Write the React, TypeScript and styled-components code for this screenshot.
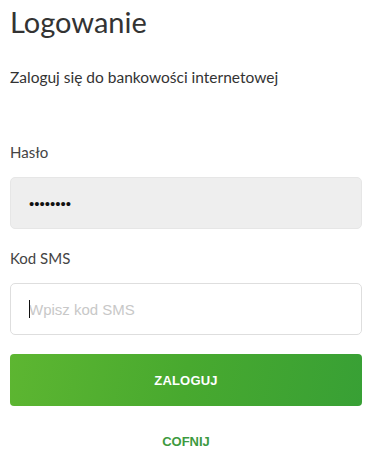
import { createGlobalStyle } from 'styled-components'
import styled from 'styled-components'

const GlobalStyle = createGlobalStyle`
  body {
    margin: 0;
    background: #fff;
    font-family: Lato, 'Open Sans', sans-serif;
    color: #333;
  }
  * {
    box-sizing: border-box;
  }
`

const Page = styled.div`
  display: flex;
  flex-direction: column;
  padding: 4px 11px 0 10px;
`

const Title = styled.h1`
  margin: 0;
  font-size: 29px;
  font-weight: 400;
  line-height: 36px;
  color: #333;
`

const Subtitle = styled.p`
  margin: 28px 0 0;
  font-size: 15.5px;
  line-height: 18px;
  color: #333;
`

const Field = styled.div<{ $first?: boolean }>`
  display: flex;
  flex-direction: column;
  margin-top: ${(p) => (p.$first ? '57px' : '20px')};
`

const Label = styled.label`
  font-size: 15px;
  line-height: 18px;
  color: #444;
  margin-bottom: 16px;
`

const InputBox = styled.div`
  position: relative;
`

const Input = styled.input<{ $filled?: boolean }>`
  display: block;
  width: 100%;
  height: 52px;
  padding: 0 18px;
  border-radius: 5px;
  border: 1px solid ${(p) => (p.$filled ? '#e6e6e6' : '#dedede')};
  background: ${(p) => (p.$filled ? '#eeeeee' : '#fff')};
  font-family: 'Liberation Sans', Arial, sans-serif;
  font-size: 15px;
  color: #111;
  outline: none;
  caret-color: #111;

  &::placeholder {
    color: #c8c8c8;
  }
`

const Caret = styled.span`
  position: absolute;
  left: 19px;
  top: 17px;
  width: 1px;
  height: 18px;
  background: #111;
  pointer-events: none;
`

const Actions = styled.div`
  display: flex;
  flex-direction: column;
  align-items: center;
  margin-top: 19px;
`

const PrimaryButton = styled.button`
  width: 100%;
  height: 52px;
  border: none;
  border-radius: 4px;
  background: linear-gradient(100deg, #5db631 0%, #48a92f 50%, #38a035 100%);
  color: #fff;
  font-family: 'Liberation Sans', Arial, sans-serif;
  font-weight: 700;
  font-size: 13px;
  letter-spacing: 0.2px;
  cursor: pointer;
`

const LinkButton = styled.button`
  margin-top: 28px;
  border: none;
  background: none;
  padding: 0;
  color: #3d9a3f;
  font-family: 'Liberation Sans', Arial, sans-serif;
  font-weight: 700;
  font-size: 13px;
  line-height: 16px;
  cursor: pointer;
`

export default function App() {
  return (
    <>
      <GlobalStyle />
      <Page>
        <Title>Logowanie</Title>
        <Subtitle>Zaloguj się do bankowości internetowej</Subtitle>

        <Field $first>
          <Label htmlFor="password">Hasło</Label>
          <InputBox>
            <Input id="password" type="password" defaultValue="12345678" readOnly $filled />
          </InputBox>
        </Field>

        <Field>
          <Label htmlFor="sms">Kod SMS</Label>
          <InputBox>
            <Input id="sms" type="text" placeholder="Wpisz kod SMS" />
            <Caret />
          </InputBox>
        </Field>

        <Actions>
          <PrimaryButton type="button">ZALOGUJ</PrimaryButton>
          <LinkButton type="button">COFNIJ</LinkButton>
        </Actions>
      </Page>
    </>
  )
}
